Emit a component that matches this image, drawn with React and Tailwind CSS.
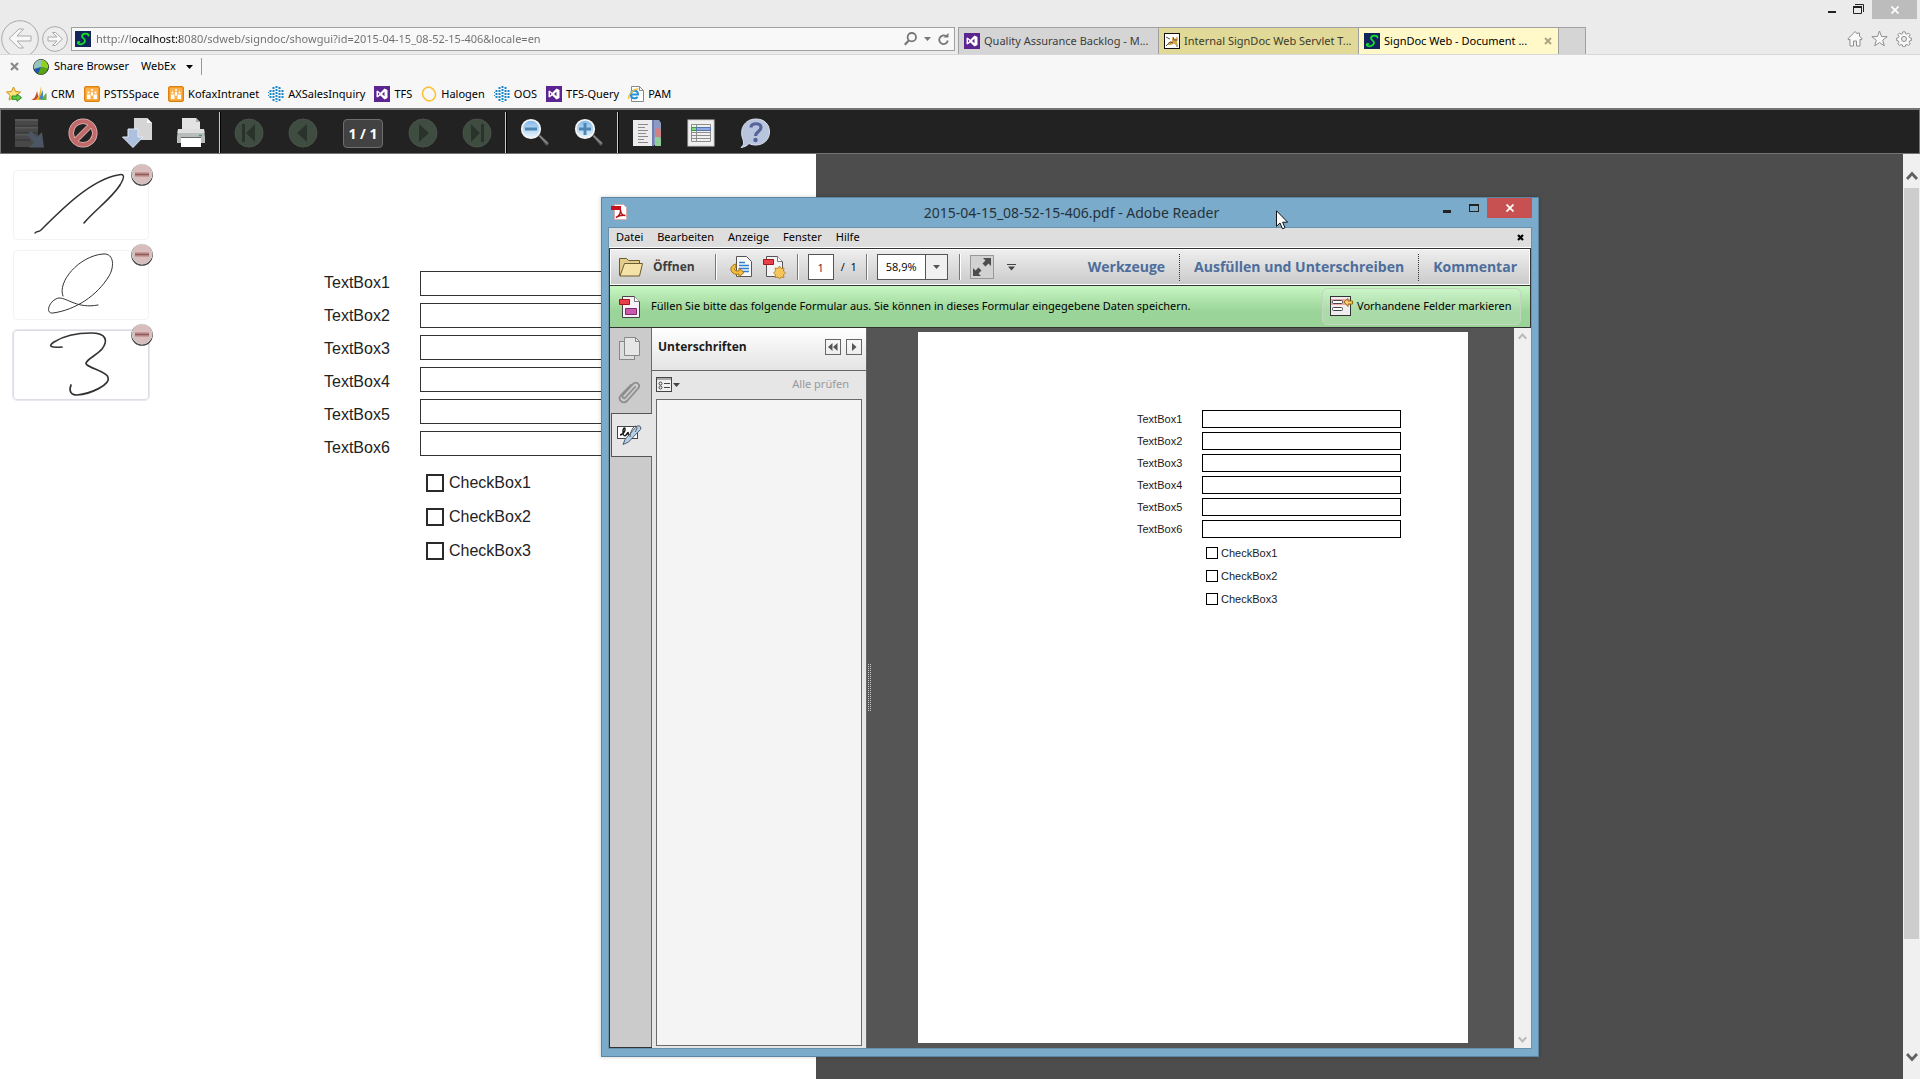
import React from "react";

const FIELDS = ["TextBox1", "TextBox2", "TextBox3", "TextBox4", "TextBox5", "TextBox6"];
const CHECKS = ["CheckBox1", "CheckBox2", "CheckBox3"];

/* ---------- small site icons ---------- */

const SignDocIcon = () => (
    <svg width="16" height="16" viewBox="0 0 16 16" className="shrink-0">
        <rect width="16" height="16" fill="#13265c" />
        <path d="M13.500 4.500c.3-2.500-6-2.500-6.500.3-.4 2.700 3.300 2.400 3 5-.3 2.700-3.800 4.200-6.300 3.200-1.500-.6-1-2.500.8-2" fill="none" stroke="#17e02c" strokeWidth="1.800" strokeLinecap="round" />
    </svg>
);

const VsIcon = () => (
    <svg width="16" height="16" viewBox="0 0 16 16" className="shrink-0">
        <rect width="16" height="16" fill="#5c2490" />
        <path d="M10.500 2.500 13.500 4v8l-3 1.500-4.200-4L3.500 11.500 2.500 11V5l1-.5 2.800 2.200zM10.500 5.700 8 8l2.500 2.300zM4 6.500v3L5.500 8z" fill="#fff" fillRule="evenodd" />
    </svg>
);

const TomcatIcon = () => (
    <svg width="16" height="16" viewBox="0 0 16 16" className="shrink-0">
        <rect x="0.5" y="0.5" width="15" height="15" fill="#fff" stroke="#111" />
        <path d="M8 4l1 1.500h3L13 3l1 3-1 3 1 3h-2l-2-1.500L7 12H3l2-3 3-1z" fill="#d9a441" />
        <path d="M2 4l4 2M2 13l4-4 3 1M12 13h2M9 4l1 3h3" stroke="#555" fill="none" />
    </svg>
);

const CrmIcon = () => (
    <svg width="16" height="16" viewBox="0 0 16 16">
        <path d="M0 14c4-1 5-5 6-9l2 9z" fill="#c8462c" />
        <path d="M4 14c4-2 5-8 6-14l1 14z" fill="#f0b429" />
        <path d="M8 13l4-9v10z" fill="#3f86c8" />
        <path d="M11 14c1-4 3-6 4.500-7v7z" fill="#6aa84f" />
    </svg>
);

const PeopleIcon = () => (
    <svg width="16" height="16" viewBox="0 0 16 16">
        <rect x="0.5" y="0.5" width="15" height="15" rx="1.5" fill="#f59a23" stroke="#d9820f" />
        <rect x="2" y="2" width="12" height="12" fill="#fbb14d" />
        <g fill="#fff">
            <circle cx="4.5" cy="6.5" r="1.1" />
            <circle cx="11.5" cy="6.5" r="1.1" />
            <circle cx="8" cy="4" r="1.1" />
            <path d="M3 8.500h3.500V13H3zM9.500 8.500H13V13H9.500zM7 6h2v3.500H7z" />
        </g>
    </svg>
);

const DotsIcon = () => (
    <svg width="16" height="16" viewBox="0 0 16 16">
        <path d="M8.500 0v16M5.500 1v14M11.500 1v14M2.500 4v8M14.500 4v8" stroke="#1b86c5" strokeWidth="2" strokeDasharray="2 1" />
        <path d="M0 6.500h2M0 9.500h2" stroke="#1b86c5" strokeDasharray="1 1" />
    </svg>
);

const RingIcon = () => (
    <svg width="16" height="16" viewBox="0 0 16 16">
        <ellipse cx="8" cy="8" rx="6.3" ry="7" transform="rotate(-28 8 8)" fill="none" stroke="#f8c234" strokeWidth="1.5" />
    </svg>
);

const IePageIcon = () => (
    <svg width="16" height="16" viewBox="0 0 16 16">
        <path d="M3.500 0.500h8l4 4v11h-12z" fill="#fff" stroke="#8a8a8a" />
        <path d="M11.500 0.500v4h4" fill="none" stroke="#8a8a8a" />
        <path d="M2.500 8.500h7.500c0-5-7-5-7.200 0-.1 4.500 5.500 4.700 6.700 2.200" fill="none" stroke="#2b8fd9" strokeWidth="2" />
        <path d="M1 13C-1 9 7 2 10.500 3" fill="none" stroke="#f2c230" strokeWidth="1.3" />
    </svg>
);

const AddFavoriteIcon = () => (
    <svg width="16" height="16" viewBox="0 0 16 16">
        <path d="M7.500 1l2 4.500 5 .5-3.800 3.300 1.200 4.700-4.400-2.500-4.500 2.500L4.200 9.300.5 6l5-.5z" fill="#fbe27a" stroke="#c98e12" />
        <path d="M6 10h5V8l4.500 3.700L11 15.300v-2H6z" fill="#5dcc45" stroke="#2b8a22" />
    </svg>
);

const WebExIcon = () => (
    <svg width="16" height="16" viewBox="0 0 16 16">
        <circle cx="8" cy="8" r="7.5" fill="#1d54b5" stroke="#333" />
        <path d="M8 .5a7.500 7.500 0 0 1 7 9L8 8z" fill="#8fd322" />
        <path d="M8 8l7 1.500A7.500 7.500 0 0 1 5 15z" fill="#5aa50f" />
        <path d="M8 .5V8L1 10A7.500 7.500 0 0 1 8 .5z" fill="#bfe8c0" opacity=".75" />
    </svg>
);

const FAVORITES = [
    { name: "CRM", Icon: CrmIcon },
    { name: "PSTSSpace", Icon: PeopleIcon },
    { name: "KofaxIntranet", Icon: PeopleIcon },
    { name: "AXSalesInquiry", Icon: DotsIcon },
    { name: "TFS", Icon: VsIcon },
    { name: "Halogen", Icon: RingIcon },
    { name: "OOS", Icon: DotsIcon },
    { name: "TFS-Query", Icon: VsIcon },
    { name: "PAM", Icon: IePageIcon }
];

const TABS = [
    { name: "Quality Assurance Backlog - M...", Icon: VsIcon, tone: "bg-[#d5d5d5] text-[#3c3c3c]" },
    { name: "Internal SignDoc Web Servlet T...", Icon: TomcatIcon, tone: "bg-[#e0d998] text-[#3c3c2c]" },
    { name: "SignDoc Web - Document ...", Icon: SignDocIcon, tone: "bg-[#fff8c8] text-black", active: true }
];

/* ---------- browser ---------- */

const TitleBar = () => (
    <div className="flex h-5 justify-end pr-[3px]">
        <button aria-label="Minimize" className="flex w-7 justify-center pt-[11px]">
            <span className="h-[2px] w-2 bg-[#222]" />
        </button>
        <button aria-label="Restore" className="flex w-6 justify-center pt-1">
            <svg width="11" height="10" viewBox="0 0 11 10">
                <path d="M2 .5h8.500V8" fill="none" stroke="#222" />
                <path d="M.5 3h8v6.500h-8z" fill="none" stroke="#222" />
                <path d="M0 3h9" stroke="#222" strokeWidth="2" />
            </svg>
        </button>
        <button aria-label="Close" className="ml-[2px] flex h-[19px] w-[45px] items-center justify-center bg-[#bcbcbc]">
            <svg width="8" height="8" viewBox="0 0 8 8">
                <path d="M.5.5l7 7M7.500.5l-7 7" stroke="#fff" strokeWidth="1.6" />
            </svg>
        </button>
    </div>
);

const NavBar = () => (
    <div className="flex h-[34px] items-start overflow-hidden">
        <button aria-label="Back" className="ml-px">
            <svg width="38" height="38" viewBox="0 0 38 38">
                <circle cx="19" cy="19" r="18.3" fill="#ededed" stroke="#a9a9a9" />
                <path d="M8 18.500l10-9.500h4.500l-6.500 7h14v5H16l6.500 7H18z" fill="#f8f8f8" stroke="#a9a9a9" strokeLinejoin="round" />
            </svg>
        </button>
        <button aria-label="Forward" className="ml-[3px] mt-[6px]">
            <svg width="26" height="26" viewBox="0 0 26 26">
                <circle cx="13" cy="13" r="12.4" fill="#ededed" stroke="#a9a9a9" />
                <path d="M20.500 13l-7-6.500h-3L15 11H6v4h9l-4.500 4.500h3z" fill="#f8f8f8" stroke="#a9a9a9" strokeLinejoin="round" />
            </svg>
        </button>
        <div className="ml-[3px] mt-[7px] flex h-6 w-[884px] items-center border border-[#a0a0a0] bg-[#f8f8f8] pl-[3px] pr-[5px]">
            <SignDocIcon />
            <input
                aria-label="Address"
                className="ml-[5px] min-w-0 flex-1 bg-[linear-gradient(90deg,#6d6d6d_36px,#000_36px,#000_84px,#6d6d6d_84px)] bg-clip-text text-[11px] text-transparent outline-none"
                defaultValue="http://localhost:8080/sdweb/signdoc/showgui?id=2015-04-15_08-52-15-406&locale=en"
            />
            <button aria-label="Search">
                <svg width="13" height="14" viewBox="0 0 13 14">
                    <circle cx="7.8" cy="5.2" r="4.2" fill="none" stroke="#777" strokeWidth="1.8" />
                    <path d="M4.800 8.500L.8 12.800" stroke="#777" strokeWidth="2.2" />
                </svg>
            </button>
            <button aria-label="Address options" className="ml-[7px]">
                <svg width="7" height="4" viewBox="0 0 7 4"><path d="M0 0h7L3.500 4z" fill="#777" /></svg>
            </button>
            <button aria-label="Refresh" className="ml-[7px]">
                <svg width="11" height="13" viewBox="0 0 11 13">
                    <path d="M8 3.200A4.300 4.300 0 1 0 9.800 7.500" fill="none" stroke="#777" strokeWidth="1.8" />
                    <path d="M5.500 4.500h5V0z" fill="#777" />
                </svg>
            </button>
        </div>

        <div role="tablist" className="ml-[3px] mt-[7px] flex h-[27px] border-r border-[#a0a0a0]">
            {TABS.map(({ name, Icon, tone, active }) => (
                <div key={name} className={`flex w-[200px] items-center border-l border-t border-[#a0a0a0] pl-[5px] ${tone}`}>
                    <button role="tab" aria-selected={!!active} className="flex items-center gap-1 whitespace-nowrap text-[11px]">
                        <Icon />
                        {name}
                    </button>
                    {active && (
                        <button aria-label="Close tab" className="ml-auto mr-[6px]">
                            <svg width="8" height="8" viewBox="0 0 8 8"><path d="M1 1l6 6M7 1L1 7" stroke="#aaa682" strokeWidth="2" /></svg>
                        </button>
                    )}
                </div>
            ))}
            <button aria-label="New tab" className="w-[27px] border-l border-t border-[#a0a0a0] bg-[#d5d5d5]" />
        </div>

        <div className="ml-auto mr-2 mt-[10px] flex gap-2">
            <button aria-label="Home">
                <svg width="16" height="17" viewBox="0 0 16 17">
                    <path d="M8 1.500L.8 9l1.200 1 1-.8V16h3.500v-5h3v5H13V9.200l1 .8 1.200-1L12.500 6V3h-2v1z" fill="#f8f8f8" stroke="#8f8f8f" />
                </svg>
            </button>
            <button aria-label="Favorites">
                <svg width="17" height="17" viewBox="0 0 17 17">
                    <path d="M8.500 1l2 5.500 5.700.2-4.500 3.500 1.600 5.600-4.800-3.200-4.800 3.200 1.600-5.600L.8 6.700l5.700-.2z" fill="#f8f8f8" stroke="#8f8f8f" />
                </svg>
            </button>
            <button aria-label="Tools">
                <svg width="16" height="16" viewBox="0 0 16 16">
                    <path d="M6.800.8h2.400l.4 1.900 1.300.5 1.700-1.100 1.600 1.700-1.100 1.600.5 1.300 1.800.5v2.300l-1.800.4-.5 1.300 1.100 1.700-1.700 1.600-1.600-1.100-1.300.5-.4 1.800H6.800l-.5-1.800-1.200-.5-1.700 1.100-1.600-1.700 1.100-1.600-.6-1.300-1.700-.4V7.200l1.700-.5.6-1.300-1.100-1.600 1.600-1.700 1.700 1.100 1.200-.5z" fill="#f8f8f8" stroke="#8f8f8f" />
                    <circle cx="8" cy="8" r="2.5" fill="#ebebeb" stroke="#8f8f8f" />
                </svg>
            </button>
        </div>
    </div>
);

const LinkBars = () => (
    <div className="border-t border-[#d8d8d8] bg-[#f7f7f7] text-[11px] text-black">
        <div className="flex h-[23px] items-center">
            <button aria-label="Close toolbar" className="ml-[10px]">
                <svg width="9" height="9" viewBox="0 0 9 9"><path d="M1 1l7 7M8 1L1 8" stroke="#8a8a8a" strokeWidth="2.2" /></svg>
            </button>
            <button className="ml-[14px] flex items-center gap-[5px]">
                <WebExIcon />
                Share Browser
            </button>
            <button className="ml-3 flex items-center gap-[10px] border-r border-[#999] pr-2">
                WebEx
                <svg width="7" height="4" viewBox="0 0 7 4"><path d="M0 0h7L3.500 4z" fill="#000" /></svg>
            </button>
        </div>
        <nav className="flex h-[30px] items-center gap-[9px] pl-[6px] pt-[2px]">
            <button aria-label="Add to favorites"><AddFavoriteIcon /></button>
            {FAVORITES.map(({ name, Icon }) => (
                <a key={name} href="#" className="flex items-center gap-1">
                    <Icon />
                    {name}
                </a>
            ))}
        </nav>
    </div>
);

/* ---------- SignDoc toolbar ---------- */

const ToolButton = ({ label, children }) => (
    <button aria-label={label} className="flex w-[54px] items-center justify-center">{children}</button>
);

const Divider = () => <span className="mx-px w-[2px] border-l border-[#c8ccd0] bg-black" />;

const RoundIcon = ({ d }) => (
    <svg width="30" height="30" viewBox="0 0 30 30">
        <circle cx="15" cy="15" r="14" fill="#3f4c40" stroke="#4b524c" />
        <path d={d} fill="#2a332b" />
    </svg>
);

const Magnifier = ({ plus }) => (
    <svg width="30" height="30" viewBox="0 0 30 30">
        <defs>
            <linearGradient id="lens" x1="0" y1="0" x2="0" y2="1">
                <stop offset="0" stopColor="#7fb6e6" />
                <stop offset="1" stopColor="#eaf6ff" />
            </linearGradient>
        </defs>
        <path d="M17.500 17l2-1.500L29 24.500c.5 1.500-1 4-3 3.500z" fill="#555" stroke="#1a1a1a" strokeWidth=".6" />
        <path d="M19.500 18l8 7.500" stroke="#8d8d8d" strokeWidth="1.5" />
        <circle cx="11" cy="11" r="9.2" fill="url(#lens)" stroke="#f3f3f3" strokeWidth="1.8" />
        <path d={plus ? "M5 11h12M11 5v12" : "M5 11h12"} stroke="#4f86b4" strokeWidth="3" />
    </svg>
);

const SignDocToolbar = () => (
    <div className="flex h-[46px] shrink-0 border-b border-l border-r border-t-2 border-[#757575] bg-[#222] pl-px pt-[2px]">
        <ToolButton label="Save">
            <svg width="30" height="30" viewBox="0 0 30 30">
                <path d="M1 1h23v28H1z" fill="#484848" />
                <path d="M1 2h23M1 9.500h23M1 16.500h14" stroke="#585858" strokeWidth="2" />
                <path d="M1 8h23M1 15h23M1 22h15" stroke="#333" />
                <path d="M13 17l4-4 6 6 5-5 2 15.500H15l5-5z" fill="#4c5563" />
            </svg>
        </ToolButton>
        <ToolButton label="Cancel">
            <svg width="30" height="30" viewBox="0 0 30 30">
                <circle cx="15" cy="15" r="11.8" fill="none" stroke="#e6bcbc" strokeWidth="5.5" />
                <path d="M7.500 22.500l15-15" stroke="#e6bcbc" strokeWidth="5.5" />
                <circle cx="15" cy="15" r="11.8" fill="none" stroke="#c06a6a" strokeWidth="4" />
                <path d="M7.500 22.500l15-15" stroke="#c06a6a" strokeWidth="4" />
            </svg>
        </ToolButton>
        <ToolButton label="Download">
            <svg width="30" height="30" viewBox="0 0 30 30">
                <path d="M12 0h13l5 5v17H12z" fill="#d5d5d5" />
                <path d="M25 0v5h5z" fill="#fafafa" />
                <path d="M6 11h10v8h5L11 29.500.5 19H6z" fill="#adc0de" stroke="#e3eaf5" />
            </svg>
        </ToolButton>
        <ToolButton label="Print">
            <svg width="28" height="30" viewBox="0 0 28 30">
                <path d="M5 0h14l4 4v8H5z" fill="#e3e3e3" />
                <path d="M19 0v4h4z" fill="#aaa" />
                <path d="M1 11h26l1 8v6H0v-6z" fill="#b9bcbc" />
                <path d="M1 11h26l.5 4H.5z" fill="#dedede" />
                <path d="M4 20h20v9H4z" fill="#fff" />
                <path d="M4 19.500h20" stroke="#666" />
                <path d="M22 17.500h3" stroke="#3aa06c" strokeWidth="1.5" />
            </svg>
        </ToolButton>
        <Divider />
        <ToolButton label="First page"><RoundIcon d="M8 6h3v18H8zM21 6v18l-9-9z" /></ToolButton>
        <ToolButton label="Previous page"><RoundIcon d="M19 6v18l-10-9z" /></ToolButton>
        <span className="mx-[13px] mt-[7px] flex h-[29px] w-10 items-center justify-center rounded border border-[#6e6e6e] bg-[#424242] font-['Open_Sans',sans-serif] text-sm font-bold text-white">1 / 1</span>
        <ToolButton label="Next page"><RoundIcon d="M11 6v18l10-9z" /></ToolButton>
        <ToolButton label="Last page"><RoundIcon d="M9 6v18l9-9zM19 6h3v18h-3z" /></ToolButton>
        <Divider />
        <ToolButton label="Zoom out"><Magnifier /></ToolButton>
        <ToolButton label="Zoom in"><Magnifier plus /></ToolButton>
        <Divider />
        <ToolButton label="Bookmarks">
            <svg width="28" height="28" viewBox="0 0 28 28">
                <path d="M19 1h7l2 3v22H19z" fill="#8c9ac6" />
                <path d="M22 9h4l2 2v7h-6z" fill="#cf8283" />
                <path d="M22 18h4l2 2v7h-6z" fill="#8fcf95" />
                <path d="M0 1h19v26H0z" fill="#ececec" />
                <path d="M19 1h2v26h-2z" fill="#6e7fb3" />
                <path d="M5 5.500h10M5 8.500h7M5 11.500h10M5 14.500h8M5 17.500h10M5 20.500h6M5 23.500h10" stroke="#8a8a8a" />
            </svg>
        </ToolButton>
        <ToolButton label="Fields">
            <svg width="28" height="28" viewBox="0 0 28 28">
                <rect x="1" y="1" width="26" height="26" fill="#f0f0f0" stroke="#cfcfcf" />
                <path d="M4.500 5.500h19v17h-19zM9.500 5.500v17M4.500 13.500h19M4.500 16.500h19M4.500 19.500h19" fill="none" stroke="#8d8d8d" />
                <path d="M4.500 8.500h5v3h-5z" fill="#7dd77f" stroke="#3f9a3f" />
                <path d="M9.500 8.500h14v3h-14z" fill="#8fabdf" stroke="#5575b0" />
            </svg>
        </ToolButton>
        <ToolButton label="Help">
            <svg width="30" height="30" viewBox="0 0 30 30">
                <path d="M1 29.500c3-3 3-4 2-8C-1 12 4 1 16 1c9 0 13.500 6 13.500 13S24 27 16 27c-3 0-5-.5-7-1.500-2 2.500-5 3.500-8 4z" fill="#b9c4dd" stroke="#dbe2f0" />
                <path d="M11 9.500C11 4.500 21 4.500 21 9.500c0 4-5.500 4-5.500 8.500" fill="none" stroke="#56639b" strokeWidth="3.2" />
                <circle cx="15.5" cy="22" r="2.2" fill="#56639b" />
            </svg>
        </ToolButton>
    </div>
);

/* ---------- signature thumbnails ---------- */

const SIGNATURES = [
    {
        name: "Signature 1",
        strokes: [
            { d: "M22 63c3-3 3 0 6-3C50 38 78 10 105 5c8-2 6 3 2 10", w: 1.4 },
            { d: "M107 15C99 28 82 40 71 53", w: 1.6 }
        ]
    },
    {
        name: "Signature 2",
        strokes: [{ d: "M50 46C44 32 66 6 90 4c12-1 11 14 6 22C84 46 62 60 40 63c-9 1-3-14 6-15 9 0 18 11 39 7", w: 1 }]
    },
    {
        name: "Signature 3",
        strokes: [{ d: "M49 17c-12 1-14-1-8-5C52 5 66 3 78 3c16 0 17 8 11 16-6 7-14 9-16 14-1 4 20 8 22 14 3 8-18 17-31 18-7 0-8-5-6-10", w: 1.7 }],
        selected: true
    }
];

const Thumbnails = () => (
    <ul className="flex flex-col gap-[10px] pl-[13px] pt-4">
        {SIGNATURES.map(({ name, strokes, selected }) => (
            <li
                key={name}
                className={`relative h-[70px] w-[136px] rounded border ${selected ? "border-[#dcdce4] shadow-[0_0_0_1px_#e8e8f0]" : "border-[#f3f3f3]"}`}
            >
                <svg width="134" height="68" viewBox="1 1 134 68" aria-label={name}>
                    {strokes.map(({ d, w }) => (
                        <path key={d} d={d} fill="none" stroke="#333" strokeWidth={w} strokeLinecap="round" />
                    ))}
                </svg>
                <button aria-label={`Remove ${name}`} className="absolute -right-[5px] -top-2">
                    <svg width="22" height="24" viewBox="0 0 22 24">
                        <circle cx="11" cy="12" r="10.8" fill="#3c3c3c" />
                        <circle cx="11" cy="11.2" r="10" fill="#d9bcbc" stroke="#d5d5d5" />
                        <path d="M4 9.500h14v4H4z" fill="#b58080" />
                        <path d="M4 11.500h14" stroke="#8f5c5c" />
                    </svg>
                </button>
            </li>
        ))}
    </ul>
);

const WebDocument = () => (
    <div className="flex-1 overflow-hidden pl-[175px] pt-[114px] font-['Liberation_Sans',sans-serif] text-base text-[#222]">
        <div className="flex">
            <div className="flex w-24 flex-col">
                {FIELDS.map((name) => (
                    <label key={name} htmlFor={`web-${name}`} className="h-[33px] leading-[30px]">{name}</label>
                ))}
            </div>
            <div className="flex flex-1 flex-col gap-[7px] pt-[3px]">
                {FIELDS.map((name) => (
                    <input key={name} id={`web-${name}`} className="h-[25px] border border-[#333] bg-white px-1 outline-none" />
                ))}
            </div>
        </div>
        <div className="flex flex-col gap-4 pl-[102px] pt-2">
            {CHECKS.map((name) => (
                <label key={name} className="flex h-[18px] items-center gap-[5px]">
                    <input type="checkbox" className="size-[18px] appearance-none border-2 border-[#2a2a2a] bg-white" />
                    {name}
                </label>
            ))}
        </div>
    </div>
);

const Chevron = ({ up, color, size }) => (
    <svg width={size} height={size} viewBox="0 0 12 12" className="mx-auto">
        <path d={up ? "M1 9l5-5.500L11 9" : "M1 3l5 5.500L11 3"} fill="none" stroke={color} strokeWidth="2.8" />
    </svg>
);

/* ---------- Adobe Reader window ---------- */

const PdfIcon = () => (
    <svg width="16" height="16" viewBox="0 0 16 16">
        <path d="M3.500.5h9l3 3v12h-12z" fill="#fff" stroke="#d0b0b0" />
        <path d="M0 2h10v4H0z" fill="#c4121f" />
        <path d="M5 13.500c3-1 5-5 4.500-7.500 0 3 2 5.500 5 5.500-4-.5-6.500 0-9.500 2z" fill="none" stroke="#b01018" strokeWidth="1.5" />
    </svg>
);

const ReaderTitle = () => (
    <div className="flex h-[29px] items-start pl-[9px] pr-[6px] text-[#26323b]">
        <div className="flex flex-1 pt-[6px]"><PdfIcon /></div>
        <h1 className="text-sm leading-[30px]">2015-04-15_08-52-15-406.pdf - Adobe Reader</h1>
        <div className="flex flex-1 justify-end">
            <button aria-label="Minimize" className="flex w-[27px] justify-center pt-3">
                <span className="h-[3px] w-2 bg-[#222]" />
            </button>
            <button aria-label="Maximize" className="flex w-[27px] justify-center pt-[6px]">
                <span className="h-2 w-[10px] border border-t-2 border-[#222]" />
            </button>
            <button aria-label="Close" className="flex h-5 w-[45px] items-center justify-center bg-[#c75050]">
                <svg width="8" height="8" viewBox="0 0 8 8"><path d="M.5.5l7 7M7.500.5l-7 7" stroke="#fff" strokeWidth="1.8" /></svg>
            </button>
        </div>
    </div>
);

const ReaderMenu = () => (
    <div className="flex h-5 items-center gap-[14px] border-b border-white bg-[#dedede] px-[7px] text-[11px] text-black">
        {["Datei", "Bearbeiten", "Anzeige", "Fenster", "Hilfe"].map((item) => (
            <button key={item}>{item}</button>
        ))}
        <button aria-label="Close document" className="ml-auto">
            <svg width="7" height="7" viewBox="0 0 7 7"><path d="M1 1l5 5M6 1L1 6" stroke="#000" strokeWidth="2.2" /></svg>
        </button>
    </div>
);

const Sep = () => <span className="h-[26px] w-[2px] border-l border-[#777] bg-white" />;
const DottedSep = () => <span className="h-[27px] border-l border-dotted border-[#333]" />;

const ReaderToolbar = () => (
    <div className="flex h-[38px] items-center border border-[#333] bg-linear-to-b from-[#efefef] to-[#cacaca] pl-[9px] pr-[13px] font-['Open_Sans',sans-serif] shadow-[inset_0_0_0_1px_#fff]">
        <button className="flex items-center gap-[10px] text-xs font-bold text-[#3d3d3d]">
            <svg width="24" height="20" viewBox="0 0 24 20">
                <path d="M.5 18.500V1.500h7l2 2h11v3" fill="#e3cd8d" stroke="#6e5c2e" />
                <path d="M5.500 6.500h18l-3 12.500H1z" fill="#f5e2a6" stroke="#6e5c2e" />
            </svg>
            Öffnen
        </button>
        <div className="ml-5 flex items-center gap-[9px]">
            <Sep />
            <div className="ml-1 mr-[2px] flex items-center gap-[11px]">
                <button aria-label="Convert">
                    <svg width="22" height="22" viewBox="0 0 22 22">
                        <path d="M6.500.5h10l5 5v15h-15z" fill="#f8f8f8" stroke="#555" />
                        <path d="M9 6.500h6M9 9.500h10M9 12.500h10M11 15.500h8" stroke="#2f7fd0" strokeWidth="1.5" />
                        <path d="M6 8c-5 1-7 6-3 9 2 1.500 4 1.500 6 1v3l5-4.500-5-4.500v3c-4 .5-6-2-3-4z" fill="#f3bd3f" stroke="#a36e11" />
                    </svg>
                </button>
                <button aria-label="Create PDF">
                    <svg width="23" height="23" viewBox="0 0 23 23">
                        <path d="M3.500.5h11l5 5v15h-16z" fill="#f4f4f4" stroke="#555" />
                        <path d="M14.500.5v5h5" fill="#fff" stroke="#777" />
                        <path d="M.5 3.500h10v5H.5z" fill="#e8404a" stroke="#a8141c" />
                        <path d="M16.500 10l1.500 2.500 3-.5-.5 3 2 2-2 1.500.5 3-3-.5-1.500 2-1.500-2-3 .5.500-3-2-1.500 2-2-.5-3 3 .5z" fill="#f6c65a" stroke="#b07a17" strokeWidth=".8" />
                    </svg>
                </button>
            </div>
            <Sep />
            <div className="flex items-center text-[11px] text-black">
                <input aria-label="Page" defaultValue="1" className="h-[26px] w-[26px] border border-[#555] bg-white text-center text-[#4a1238] outline-none" />
                <span className="ml-[7px] whitespace-pre">/  1</span>
            </div>
            <Sep />
            <div className="relative mr-[2px]">
                <select aria-label="Zoom" className="block h-[26px] w-[71px] appearance-none border border-[#555] bg-white pl-2 text-[11px] text-black outline-none">
                    <option>58,9%</option>
                </select>
                <span className="pointer-events-none absolute inset-y-px right-px flex w-[22px] items-center justify-center border-l border-[#555] bg-[#f0f0f0]">
                    <svg width="7" height="4" viewBox="0 0 7 4"><path d="M0 0h7L3.500 4z" fill="#555" /></svg>
                </span>
            </div>
            <Sep />
            <button aria-label="Full screen">
                <svg width="24" height="24" viewBox="0 0 24 24">
                    <rect x=".5" y=".5" width="23" height="23" fill="#d2d2d2" stroke="#999" />
                    <path d="M21 3v8l-2.500-2.500-3 3-3-3 3-3L13 3zM3 21v-8l2.500 2.500 3-3 3 3-3 3L11 21z" fill="#4d4d4d" />
                </svg>
            </button>
            <button aria-label="More tools" className="ml-1">
                <svg width="9" height="7" viewBox="0 0 9 7">
                    <path d="M0 .5h9" stroke="#444" />
                    <path d="M1 2.500h7L4.500 6.500z" fill="#444" />
                </svg>
            </button>
        </div>
        <div className="ml-auto flex items-center gap-[14px] text-sm font-bold text-[#4d6d9c]">
            <button>Werkzeuge</button>
            <DottedSep />
            <button>Ausfüllen und Unterschreiben</button>
            <DottedSep />
            <button>Kommentar</button>
        </div>
    </div>
);

const FormBanner = () => (
    <div className="flex h-[42px] items-center border-x border-b border-[#333] bg-linear-to-b from-[#c8f7c3] via-[#9cd599] via-60% to-[#9ad397] pl-[9px] pr-[9px] text-[11px] text-black">
        <svg width="22" height="22" viewBox="0 0 22 22">
            <path d="M3.500.5h12l5 5v16h-17z" fill="#f8f2f8" stroke="#444" />
            <path d="M15.500.5v5h5" fill="#fff" stroke="#777" />
            <path d="M.5 3.500h10v5H.5z" fill="#e8404a" stroke="#a8141c" />
            <path d="M6.500 12.500h11v6h-11z" fill="#c95ab0" stroke="#7d2c6b" />
        </svg>
        <p className="ml-[10px]">Füllen Sie bitte das folgende Formular aus. Sie können in dieses Formular eingegebene Daten speichern.</p>
        <button className="ml-auto flex h-[37px] w-[199px] items-center gap-1 whitespace-nowrap rounded-[5px] border border-[#c3d6c0] bg-white/15 pl-[7px]">
            <svg width="23" height="21" viewBox="0 0 23 21">
                <rect x=".5" y=".5" width="20" height="19" fill="#eee" stroke="#333" />
                <path d="M1 3h19v6H1z" fill="#f0a9a9" />
                <rect x="2.5" y="4.5" width="10" height="3" rx="1" fill="#fff" stroke="#444" />
                <rect x="2.5" y="11.5" width="10" height="3" rx="1" fill="#fff" stroke="#444" />
                <path d="M14 6l4-3.500V5h4.500v3H18v2.500z" fill="#f8d36d" stroke="#96680f" />
            </svg>
            Vorhandene Felder markieren
        </button>
    </div>
);

const SideStrip = () => (
    <div className="flex w-[43px] flex-col border-b border-l border-[#333] bg-[#cbcbcb]">
        <div className="flex h-[85px] flex-col items-center border-r border-[#6a6a6a] pr-[2px] pt-[9px]">
            <button aria-label="Page thumbnails">
                <svg width="22" height="24" viewBox="0 0 22 24">
                    <rect x=".5" y="4.5" width="15" height="18" fill="#ddd" stroke="#888" />
                    <path d="M5.500.5h11l4 4v14h-15z" fill="#e6e6e6" stroke="#888" />
                    <path d="M16.500.5v4h4" fill="none" stroke="#888" />
                </svg>
            </button>
            <button aria-label="Attachments" className="mt-[19px]">
                <svg width="24" height="24" viewBox="0 0 24 24">
                    <path d="M17 7l-9.500 10.500c-2 2-4-.5-2.500-2.500L15 4c3-3 8 0 5.500 4L9.500 20.500C5 25-1 20 3 15L13 5" fill="none" stroke="#8e8e8e" strokeWidth="1.8" strokeLinecap="round" />
                </svg>
            </button>
        </div>
        <button aria-label="Signatures" className="ml-px flex h-11 items-center justify-center border-y border-l border-[#555] bg-[#e6e6e6] pr-1">
            <svg width="26" height="22" viewBox="0 0 26 22">
                <rect x=".5" y="2.5" width="20" height="12" fill="#fff" stroke="#444" />
                <path d="M3 11c5-1 6-7 4.500-7S5 10 7 11.500s3-3 4-3-1 3 1.500 3" fill="none" stroke="#111" strokeWidth="1.3" />
                <path d="M6 20.500l2-5L18.500 3.500C20 1 25 1 23.500 5.500L11.500 18z" fill="#b5d0ea" stroke="#4c5b6b" />
                <path d="M13 13c0-4 2-9 5-11 3 0 2 4 0 6" fill="none" stroke="#555" />
            </svg>
        </button>
        <div className="flex-1 border-r border-[#6a6a6a]" />
    </div>
);

const SignaturePanel = () => (
    <div className="flex w-[215px] flex-col border-r border-[#666] bg-[#e6e6e6] text-[11px]">
        <div className="flex h-[43px] items-center gap-[5px] border-b border-[#666] bg-linear-to-b from-white to-[#e4e4e4] pb-1 pl-[6px] pr-1">
            <h2 className="mr-auto font-['Open_Sans',sans-serif] text-xs font-bold text-[#1c1c1c]">Unterschriften</h2>
            <button aria-label="Collapse" className="flex size-4 items-center justify-center border border-[#666]">
                <svg width="10" height="8" viewBox="0 0 10 8"><path d="M4.500 0v8L0 4zM9.500 0v8L5 4z" fill="#555" /></svg>
            </button>
            <button aria-label="Expand" className="flex size-4 items-center justify-center border border-[#666]">
                <svg width="5" height="8" viewBox="0 0 5 8"><path d="M0 0v8l4.500-4z" fill="#555" /></svg>
            </button>
        </div>
        <div className="flex h-7 items-center pb-px pl-1 pr-[17px]">
            <button aria-label="Options" className="flex items-center gap-px">
                <svg width="16" height="15" viewBox="0 0 16 15">
                    <rect x=".5" y=".5" width="15" height="14" fill="#f0f0f0" stroke="#444" />
                    <path d="M1 2h14" stroke="#aaa" strokeWidth="2" />
                    <circle cx="4.5" cy="6.5" r="1.5" fill="none" stroke="#444" />
                    <circle cx="4.5" cy="10.5" r="1.5" fill="none" stroke="#444" />
                    <path d="M8 6.500h6M8 10.500h6" stroke="#444" />
                </svg>
                <svg width="7" height="4" viewBox="0 0 7 4"><path d="M0 0h7L3.500 4z" fill="#444" /></svg>
            </button>
            <button className="ml-auto text-[#999]" disabled>Alle prüfen</button>
        </div>
        <div className="mx-1 mb-[2px] flex-1 border border-[#6a6a6a] bg-[#f4f4f4]" />
    </div>
);

const PdfPage = () => (
    <div className="mb-[5px] ml-[42px] mr-[46px] mt-1 flex-1 bg-white pl-[219px] pt-[78px] font-['Liberation_Sans',sans-serif] text-[11px] text-[#1a1a1a]">
        <div className="flex">
            <div className="flex w-[65px] flex-col">
                {FIELDS.map((name) => (
                    <label key={name} htmlFor={`pdf-${name}`} className="h-[22px] leading-[18px]">{name}</label>
                ))}
            </div>
            <div className="flex w-[199px] flex-col gap-1">
                {FIELDS.map((name) => (
                    <input key={name} id={`pdf-${name}`} className="h-[18px] border border-black bg-white px-1 outline-none" />
                ))}
            </div>
        </div>
        <div className="flex flex-col gap-[11px] pl-[69px] pt-[5px]">
            {CHECKS.map((name) => (
                <label key={name} className="flex h-3 items-center gap-[3px]">
                    <input type="checkbox" className="size-3 appearance-none border border-black bg-white" />
                    {name}
                </label>
            ))}
        </div>
    </div>
);

const ReaderWindow = () => (
    <section className="absolute bottom-[22px] left-[601px] right-[381px] top-[197px] flex flex-col border border-[#5a86a3] bg-[#7aabca] shadow-[0_0_4px_rgba(0,0,0,0.2)]">
        <ReaderTitle />
        <div className="mx-[6px] mb-[7px] flex min-h-0 flex-1 flex-col border border-[#6891ab]">
            <ReaderMenu />
            <ReaderToolbar />
            <FormBanner />
            <div className="flex min-h-0 flex-1">
                <SideStrip />
                <SignaturePanel />
                <div className="flex min-w-0 flex-1 bg-[#555]">
                    <div className="ml-px mr-px flex items-center">
                        <svg width="7" height="48" viewBox="0 0 7 48">
                            <path d="M.5 0v48M2.500 0v48" stroke="#c8c8c8" strokeDasharray="1 1" />
                        </svg>
                    </div>
                    <PdfPage />
                    <div className="flex w-[17px] flex-col justify-between bg-[#f0f0f0] py-1">
                        <Chevron up color="#bbb" size={9} />
                        <Chevron color="#bbb" size={9} />
                    </div>
                </div>
            </div>
        </div>
    </section>
);

const Cursor = () => (
    <svg width="13" height="20" viewBox="0 0 13 20" className="absolute left-[1276px] top-[210px]">
        <path d="M.5.8v15.500l3.500-3.300 2.500 5.800 2.500-1.100-2.400-5.500h5z" fill="#fff" stroke="#111" />
    </svg>
);

const App = () => (
    <div className="relative flex h-screen flex-col overflow-hidden bg-[#ebebeb] font-['Noto_Sans',sans-serif]">
        <header className="shrink-0">
            <TitleBar />
            <NavBar />
            <LinkBars />
        </header>
        <SignDocToolbar />
        <main className="flex min-h-0 flex-1 bg-[#4d4d4d]">
            <div className="flex w-[42.5%] bg-white">
                <Thumbnails />
                <WebDocument />
            </div>
            <div className="ml-auto flex w-[17px] flex-col bg-[#f0f0f0] py-4">
                <Chevron up color="#606060" size={12} />
                <div className="mx-px mb-[112px] mt-[6px] flex-1 bg-[#cdcdcd]" />
                <Chevron color="#606060" size={12} />
            </div>
        </main>
        <ReaderWindow />
        <Cursor />
    </div>
);

export default App;
